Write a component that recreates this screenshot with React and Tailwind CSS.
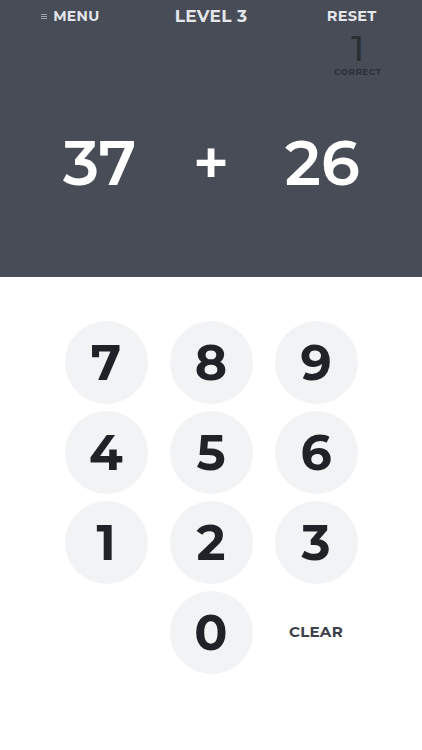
import React from "react";

const font = { fontFamily: "Montserrat, 'Liberation Sans', Arial, sans-serif" };

function Key({ d }) {
  return (
    <button className="w-[83px] h-[83px] rounded-full bg-[#f2f3f5] flex items-center justify-center text-[49px] font-bold text-[#1f2227] leading-none">
      {d}
    </button>
  );
}

export default function App() {
  return (
    <div className="w-[422px] h-[750px] bg-white flex flex-col" style={font}>
      <div className="h-[277px] bg-[#474c56] flex flex-col">
        <div className="grid grid-cols-3 pt-[7px] h-[26px] items-start">
          <div className="flex items-center justify-center gap-[6px] text-[14px] font-bold text-[#e4e6ec] leading-[19px] tracking-[0.3px]">
            <span className="flex flex-col gap-[1px] w-[6px]">
              <span className="h-[1px] bg-[#9ea2ab]" />
              <span className="h-[1px] bg-[#9ea2ab]" />
              <span className="h-[1px] bg-[#9ea2ab]" />
            </span>
            MENU
          </div>
          <div className="text-center text-[17px] font-bold text-[#e4e6ec] leading-[19px] tracking-[0.3px]">LEVEL 3</div>
          <div className="text-center text-[14.5px] font-bold text-[#e4e6ec] leading-[19px] tracking-[0.3px]">RESET</div>
        </div>
        <div className="grid grid-cols-3 mt-[5px]">
          <div />
          <div />
          <div className="flex flex-col items-center pl-[12px]">
            <div className="text-[35px] font-medium text-[#2a2e35] leading-[35px]">1</div>
            <div className="mt-[1px] text-[9px] font-bold text-[#2e3239] leading-[9px] tracking-[0.3px]">CORRECT</div>
          </div>
        </div>
        <div className="w-[334px] mx-auto grid grid-cols-3 mt-[56px] text-[62px] font-semibold text-white leading-none text-center">
          <div>37</div>
          <div>+</div>
          <div>26</div>
        </div>
      </div>
      <div className="flex justify-center pt-[44px]">
        <div className="grid grid-cols-[83px_83px_83px] gap-x-[22px] gap-y-[7px]">
          <Key d="7" />
          <Key d="8" />
          <Key d="9" />
          <Key d="4" />
          <Key d="5" />
          <Key d="6" />
          <Key d="1" />
          <Key d="2" />
          <Key d="3" />
          <div />
          <Key d="0" />
          <button className="w-[83px] h-[83px] flex items-center justify-center text-[15px] font-bold text-[#3c4049] tracking-[0.3px]">
            CLEAR
          </button>
        </div>
      </div>
    </div>
  );
}
